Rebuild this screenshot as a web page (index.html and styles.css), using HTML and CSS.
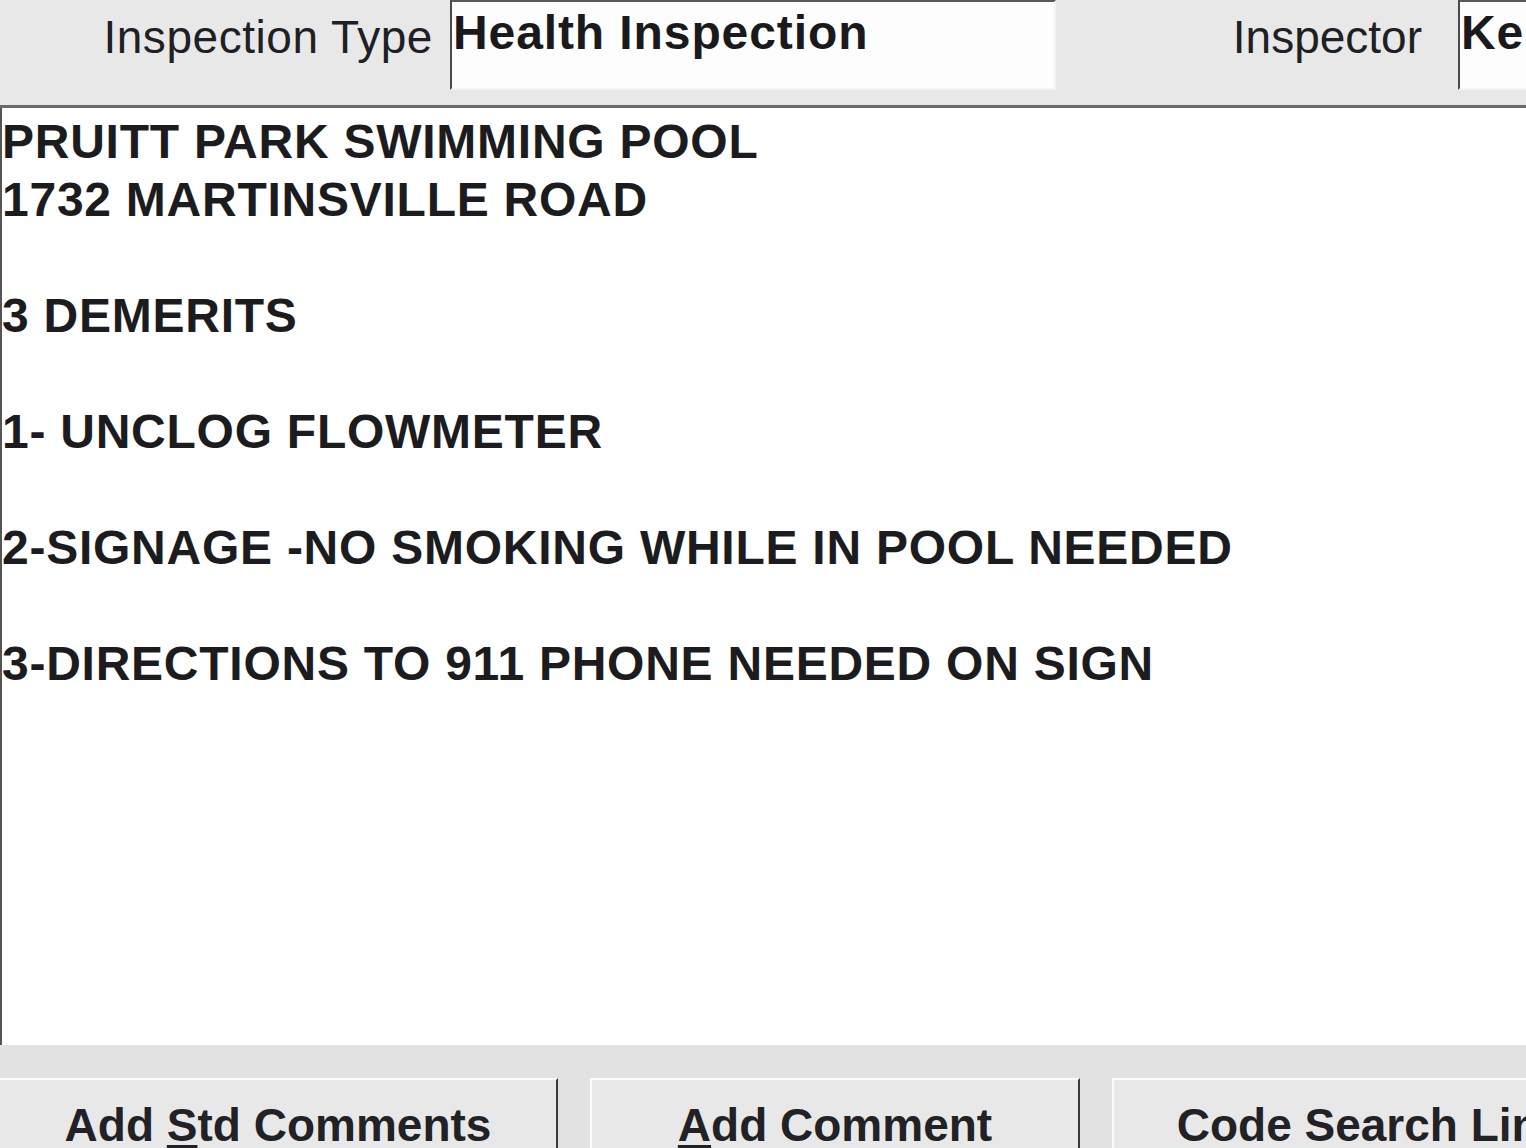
FILE: index.html
```html
<!DOCTYPE html>
<html>
<head>
<meta charset="utf-8">
<link rel="stylesheet" href="styles.css">
</head>
<body>
<div class="screen">
  <div class="topbar">
    <div class="label label-type">Inspection Type</div>
    <div class="field field-type">Health Inspection</div>
    <div class="label label-inspector">Inspector</div>
    <div class="field field-inspector">Ke</div>
  </div>
  <div class="notes">
    <div class="line">PRUITT PARK SWIMMING POOL</div>
    <div class="line">1732 MARTINSVILLE ROAD</div>
    <div class="line">&nbsp;</div>
    <div class="line">3 DEMERITS</div>
    <div class="line">&nbsp;</div>
    <div class="line">1- UNCLOG FLOWMETER</div>
    <div class="line">&nbsp;</div>
    <div class="line">2-SIGNAGE -NO SMOKING WHILE IN POOL NEEDED</div>
    <div class="line">&nbsp;</div>
    <div class="line">3-DIRECTIONS TO 911 PHONE NEEDED ON SIGN</div>
  </div>
  <div class="buttonbar">
    <div class="btn btn-std">Add <u>S</u>td Comments</div>
    <div class="btn btn-add"><u>A</u>dd Comment</div>
    <div class="btn btn-code">Code Search Link</div>
  </div>
</div>
</body>
</html>
```

FILE: styles.css
```css
html, body {
  margin: 0;
  padding: 0;
  background: #e6e6e6;
}
body {
  width: 1526px;
  height: 1148px;
  overflow: hidden;
  font-family: "Liberation Sans", Arial, sans-serif;
  color: #1c1c1e;
}
.screen {
  display: flex;
  flex-direction: column;
  height: 1148px;
}
.topbar {
  height: 105px;
  flex: none;
  display: grid;
  grid-template-columns: 450px 606px 402px 1fr;
  align-items: start;
  background: #e8e8e8;
  border-bottom: 3px solid #6a6a6a;
}
.label {
  font-size: 46px;
  line-height: 53px;
  padding-top: 11px;
  text-align: right;
  white-space: nowrap;
  color: #202024;
}
.label-type {
  padding-right: 17px;
  letter-spacing: 0.55px;
}
.label-inspector { padding-right: 36px; }
.field {
  background: #fdfdfd;
  border-top: 2px solid #5a5a5a;
  border-left: 2px solid #4a4a4a;
  border-bottom: 2px solid #f4f4f4;
  border-right: 2px solid #f4f4f4;
  font-size: 48px;
  font-weight: bold;
  line-height: 56px;
  padding-top: 3px;
  padding-left: 1px;
  box-sizing: border-box;
  height: 90px;
  white-space: nowrap;
  overflow: hidden;
  letter-spacing: 0.9px;
  color: #1a1a1c;
}
.field-inspector {
  border-right: none;
}
.notes {
  flex: none;
  height: 937px;
  box-sizing: border-box;
  background: #ffffff;
  border-left: 2px solid #555;
  padding-top: 5px;
  font-size: 48px;
  font-weight: bold;
  line-height: 58px;
  letter-spacing: 0.75px;
  color: #1c1c1e;
  overflow: hidden;
}
.line {
  white-space: nowrap;
}
.buttonbar {
  flex: 1;
  background: #e2e2e2;
  display: grid;
  grid-template-columns: 558px 490px 518px;
  column-gap: 32px;
  padding-top: 33px;
  overflow: hidden;
}
.btn {
  height: 120px;
  box-sizing: border-box;
  background: #e8e8e8;
  border-top: 2px solid #fafafa;
  border-left: 2px solid #fafafa;
  border-right: 2px solid #3a3a3a;
  font-size: 46px;
  font-weight: bold;
  line-height: 53px;
  padding-top: 19px;
  text-align: center;
  white-space: nowrap;
  color: #222226;
}
.btn-std {
  border-left: none;
}
.btn u {
  text-decoration-thickness: 3px;
  text-underline-offset: 4px;
}
```
